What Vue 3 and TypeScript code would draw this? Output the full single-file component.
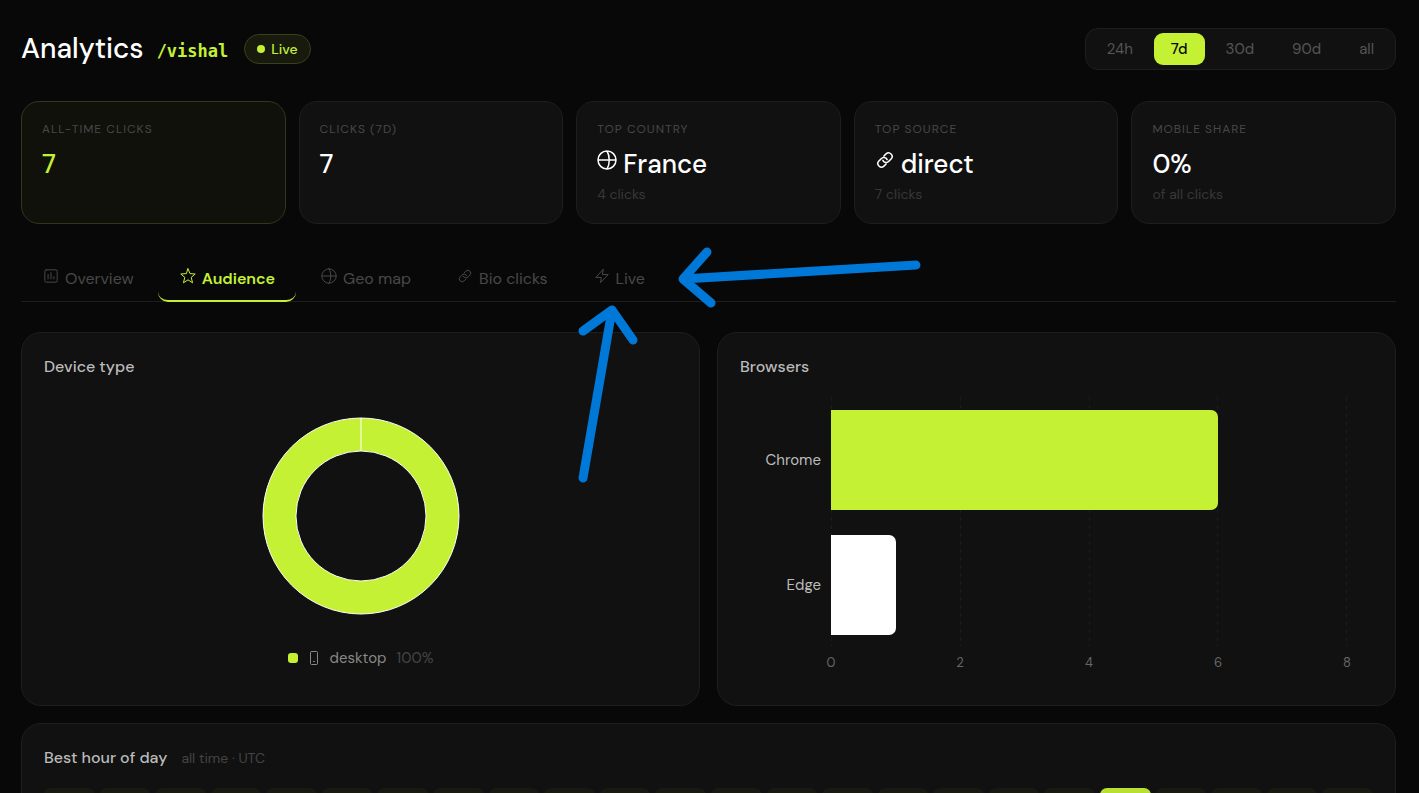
<script setup lang="ts">
import { ref } from 'vue'

type IconName = 'chart' | 'star' | 'globe' | 'link' | 'bolt'

interface Stat {
  label: string
  value: string
  sub?: string
  icon?: IconName
  accent?: boolean
}

interface Tab {
  id: string
  label: string
  icon: IconName
}

interface Icon {
  box: string
  d: string
}

const ranges: string[] = ['24h', '7d', '30d', '90d', 'all']
const range = ref('7d')

const stats: Stat[] = [
  { label: 'All-time clicks', value: '7', accent: true },
  { label: 'Clicks (7d)', value: '7' },
  { label: 'Top country', value: 'France', sub: '4 clicks', icon: 'globe' },
  { label: 'Top source', value: 'direct', sub: '7 clicks', icon: 'link' },
  { label: 'Mobile share', value: '0%', sub: 'of all clicks' },
]

const tabs: Tab[] = [
  { id: 'overview', label: 'Overview', icon: 'chart' },
  { id: 'audience', label: 'Audience', icon: 'star' },
  { id: 'geo', label: 'Geo map', icon: 'globe' },
  { id: 'bio', label: 'Bio clicks', icon: 'link' },
  { id: 'live', label: 'Live', icon: 'bolt' },
]
const tab = ref('audience')

const icons: Record<IconName, Icon> = {
  chart: {
    box: '-1 -1 22 22',
    d: 'M3.500 1.500h13a2 2 0 0 1 2 2v13a2 2 0 0 1-2 2h-13a2 2 0 0 1-2-2v-13a2 2 0 0 1 2-2zM6 8v6M10 5.500v8.500M14 11v3',
  },
  star: {
    box: '0 0 20 20',
    d: 'M10 1l2.500 6 6.500.5-5 4.200 1.700 6.800L10 14.800 4.300 18.500 6 11.700 1 7.500 7.500 7z',
  },
  globe: {
    box: '0 0 20 20',
    d: 'M10 1a9 9 0 1 0 0 18a9 9 0 1 0 0-18zM1 10h18M10 1c3 5 3 13 0 18',
  },
  link: {
    box: '-2 -2 28 28',
    d: 'M9 12.500a5 5 0 0 0 8.540 1.040l3-3a5 5 0 0 0-7.070-7.070l-3 3M15 11.500a5 5 0 0 0-8.540-1.040l-3 3a5 5 0 0 0 7.070 7.070l3-3',
  },
  bolt: {
    box: '-1 -1 22 22',
    d: 'M11.500 1L1.500 12h7.500l-1 7L18.500 8H11z',
  },
}

const browsers = [
  { name: 'Chrome', count: 6, tone: 'lime' },
  { name: 'Edge', count: 1, tone: 'white' },
]
const axisMax = 8
const ticks = [0, 2, 4, 6, 8]

const hours = Array.from({ length: 24 }, (_, h) => ({ hour: h, peak: h === 19 }))
</script>

<template>
  <main class="page">
    <header class="top">
      <div class="heading">
        <h1>Analytics</h1>
        <span class="slug">/vishal</span>
        <span class="live"><i class="dot"></i>Live</span>
      </div>
      <div class="ranges" role="group" aria-label="Time range">
        <button
          v-for="r in ranges"
          :key="r"
          type="button"
          :class="{ on: r === range }"
          :aria-pressed="r === range"
          @click="range = r"
        >{{ r }}</button>
      </div>
    </header>

    <section class="stats">
      <article v-for="s in stats" :key="s.label" class="stat" :class="{ accent: s.accent }">
        <div class="label">{{ s.label }}</div>
        <div class="value">
          <svg v-if="s.icon" class="icon" :viewBox="icons[s.icon].box"><path :d="icons[s.icon].d" /></svg>
          <span>{{ s.value }}</span>
        </div>
        <div v-if="s.sub" class="sub">{{ s.sub }}</div>
      </article>
    </section>

    <nav class="tabs" role="tablist">
      <button
        v-for="t in tabs"
        :key="t.id"
        type="button"
        role="tab"
        :class="{ on: t.id === tab }"
        :aria-selected="t.id === tab"
        @click="tab = t.id"
      >
        <svg class="icon" :viewBox="icons[t.icon].box"><path :d="icons[t.icon].d" /></svg>
        <span>{{ t.label }}</span>
      </button>
    </nav>

    <section class="panels">
      <article class="panel">
        <h2>Device type</h2>
        <div class="donut">
          <svg viewBox="0 0 200 200" role="img" aria-label="desktop 100%">
            <path
              d="M100 2A98 98 0 1 0 100 198A98 98 0 1 0 100 2zM100 35A65 65 0 1 1 100 165A65 65 0 1 1 100 35z"
            />
            <path d="M100 2V35" />
          </svg>
        </div>
        <div class="legend">
          <i class="swatch"></i>
          <svg class="phone" viewBox="0 0 10 16">
            <rect x="1.500" y="1.500" width="7" height="13" rx="1" />
            <path d="M4.500 11.500h1" />
          </svg>
          <span>desktop</span>
          <span class="pct">100%</span>
        </div>
      </article>

      <article class="panel">
        <h2>Browsers</h2>
        <div class="chart">
          <div class="names">
            <span v-for="b in browsers" :key="b.name">{{ b.name }}</span>
          </div>
          <div class="plot">
            <div class="lines"><i v-for="t in ticks" :key="t"></i></div>
            <div class="bars">
              <div
                v-for="b in browsers"
                :key="b.name"
                class="bar"
                :class="b.tone"
                :style="{ width: (b.count / axisMax) * 100 + '%' }"
              ></div>
            </div>
          </div>
          <div class="axis"><span v-for="t in ticks" :key="t">{{ t }}</span></div>
        </div>
      </article>
    </section>

    <section class="panel hours">
      <h2>Best hour of day <small>all time · UTC</small></h2>
      <div class="cells">
        <i v-for="h in hours" :key="h.hour" :class="{ peak: h.peak }"></i>
      </div>
    </section>

    <svg class="arrows" viewBox="0 0 360 250" aria-hidden="true">
      <path d="M346 25L113 39M137 12L113 39L141 63" />
      <path d="M13 238L42 70M13 91L42 70L63 100" />
    </svg>
  </main>
</template>

<style>
html,
body {
  background: #080808;
}
body {
  height: 100vh;
  overflow: hidden;
}
</style>

<style scoped>
* {
  box-sizing: border-box;
}
.page {
  position: relative;
  padding: 28px 23px 24px 21px;
  font-family: 'DM Sans', Inter, 'Open Sans', sans-serif;
  color: #fff;
}
button {
  font: inherit;
  border: 0;
  background: none;
  cursor: pointer;
}
.icon {
  fill: none;
  stroke: currentColor;
  stroke-width: 1px;
  stroke-linejoin: round;
  stroke-linecap: round;
  flex: none;
}
.icon path {
  vector-effect: non-scaling-stroke;
}
.top {
  display: flex;
  justify-content: space-between;
  align-items: center;
  height: 42px;
}
.heading {
  display: flex;
  align-items: center;
}
h1 {
  margin: 0;
  font-size: 28px;
  line-height: 40px;
  font-weight: 500;
}
.slug {
  margin: 4px 16px 0 13px;
  font: 700 17px/24px 'DejaVu Sans Mono', monospace;
  color: #c5f135;
}
.live {
  display: flex;
  align-items: center;
  gap: 6px;
  height: 30px;
  padding: 0 12px;
  border: 1px solid #38421a;
  border-radius: 15px;
  background: #171a0c;
  color: #c5f135;
  font-size: 14px;
  font-weight: 500;
}
.dot {
  width: 8px;
  height: 8px;
  border-radius: 50%;
  background: #c5f135;
}
.ranges {
  display: flex;
  gap: 4px;
  padding: 4px;
  border: 1px solid #1e1e1e;
  border-radius: 13px;
  background: #111;
}
.ranges button {
  height: 32px;
  padding: 0 17px;
  border-radius: 9px;
  font-size: 15px;
  color: #555;
}
.ranges .on {
  background: #c5f135;
  color: #0a0a0a;
  font-weight: 500;
}
.stats {
  display: grid;
  grid-template-columns: repeat(5, 1fr);
  gap: 13px;
  margin-top: 31px;
}
.stat {
  min-height: 123px;
  padding: 18px 20px;
  border: 1px solid #1e1e1e;
  border-radius: 18px;
  background: #111;
}
.accent {
  background: #10110b;
  border-color: #31371b;
}
.label {
  font-size: 12px;
  line-height: 18px;
  text-transform: uppercase;
  letter-spacing: 1px;
  color: #484848;
}
.value {
  display: flex;
  align-items: flex-start;
  gap: 6px;
  margin-top: 8px;
  font-size: 26px;
  line-height: 36px;
  font-weight: 500;
}
.value .icon {
  width: 20px;
  height: 20px;
  margin-top: 4px;
  stroke-width: 1.5px;
}
.accent .value {
  color: #c5f135;
}
.sub {
  margin-top: 3px;
  font-size: 14px;
  line-height: 18px;
  color: #383838;
}
.tabs {
  display: flex;
  gap: 3px;
  margin-top: 32px;
  border-bottom: 1px solid #1e1e1e;
}
.tabs button {
  display: flex;
  align-items: center;
  gap: 6px;
  height: 46px;
  margin-bottom: -1px;
  padding: 2px 21px 0 22px;
  border-bottom: 2px solid transparent;
  border-radius: 10px;
  font-size: 16px;
  line-height: 22px;
  color: #484848;
}
.tabs .icon {
  width: 16px;
  height: 16px;
  margin-bottom: 7px;
}
.tabs .on {
  color: #c5f135;
  border-bottom-color: #c5f135;
  font-weight: 600;
}
.panels {
  display: grid;
  grid-template-columns: 1fr 1fr;
  gap: 17px;
  margin-top: 30px;
}
.panel {
  padding: 24px 22px 22px;
  border: 1px solid #1e1e1e;
  border-radius: 20px;
  background: #111;
}
h2 {
  margin: 0;
  font-size: 16px;
  line-height: 20px;
  font-weight: 500;
  color: #bbb;
}
.donut {
  display: flex;
  justify-content: center;
  align-items: center;
  height: 238px;
  margin-top: 20px;
}
.donut svg {
  width: 200px;
  height: 200px;
  fill: #c5f135;
  fill-rule: evenodd;
  stroke: #fff;
}
.legend {
  display: flex;
  justify-content: center;
  align-items: center;
  gap: 10px;
  margin-top: 12px;
  font-size: 15px;
  line-height: 22px;
  color: #888;
}
.swatch {
  width: 10px;
  height: 10px;
  border-radius: 3px;
  background: #c5f135;
}
.phone {
  width: 10px;
  height: 16px;
  margin: 0 1px;
  fill: none;
  stroke: currentColor;
  stroke-linecap: round;
}
.pct {
  color: #444;
}
.chart {
  display: grid;
  grid-template-columns: 81px 1fr;
  column-gap: 10px;
  margin-top: 20px;
  padding-right: 26px;
}
.names {
  display: grid;
  grid-template-rows: 1fr 1fr;
  align-items: center;
  justify-items: end;
  font-size: 15px;
  color: #bbb;
}
.plot {
  display: grid;
  height: 250px;
}
.lines,
.bars {
  grid-area: 1 / 1;
}
.lines {
  display: flex;
  justify-content: space-between;
}
.lines i {
  width: 1px;
  background: repeating-linear-gradient(#1b1b1b 0 4px, transparent 4px 8px);
}
.bars {
  display: grid;
  grid-template-rows: 1fr 1fr;
  align-items: center;
}
.bar {
  height: 100px;
  border-radius: 0 7px 7px 0;
}
.lime {
  background: #c5f135;
}
.white {
  background: #fff;
}
.axis {
  grid-column: 2;
  display: flex;
  justify-content: space-between;
  height: 36px;
  padding-top: 6px;
  font-size: 13px;
  line-height: 20px;
  color: #666;
}
.axis span {
  display: flex;
  justify-content: center;
  width: 0;
}
.hours {
  margin-top: 17px;
}
.hours h2 {
  display: flex;
  gap: 14px;
}
small {
  font-size: 14px;
  font-weight: 400;
  color: #444;
}
.cells {
  display: grid;
  grid-template-columns: repeat(24, 1fr);
  gap: 5px;
  margin-top: 20px;
}
.cells i {
  height: 50px;
  border-radius: 7px;
  background: #181911;
}
.cells .peak {
  background: #b7e031;
}
.arrows {
  position: absolute;
  top: 240px;
  left: 570px;
  width: 360px;
  height: 250px;
  fill: none;
  stroke: #0078d7;
  stroke-width: 9;
  stroke-linecap: round;
  stroke-linejoin: round;
  pointer-events: none;
}
</style>
